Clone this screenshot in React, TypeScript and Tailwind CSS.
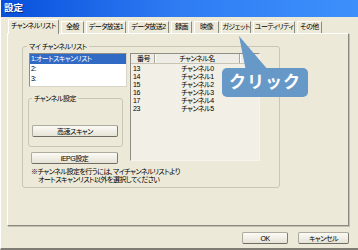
import React from 'react';

interface Tab {
  label: string;
  w: string;
  active?: boolean;
}

const tabs: Tab[] = [
  { label: 'チャンネルリスト', w: 'w-[51px]', active: true },
  { label: '全般', w: 'w-[23px]' },
  { label: 'データ放送1', w: 'w-[40px]' },
  { label: 'データ放送2', w: 'w-[41px]' },
  { label: '録画', w: 'w-[21px]' },
  { label: '映像', w: 'w-[25px]' },
  { label: 'ガジェット', w: 'w-[30px]' },
  { label: 'ユーティリティ', w: 'w-[42px]' },
  { label: 'その他', w: 'w-[25px]' },
];

const channels = [
  { no: '13', name: 'チャンネル0' },
  { no: '14', name: 'チャンネル1' },
  { no: '15', name: 'チャンネル2' },
  { no: '16', name: 'チャンネル3' },
  { no: '17', name: 'チャンネル4' },
  { no: '23', name: 'チャンネル5' },
];

const Btn = ({ children, className = '' }: { children: React.ReactNode; className?: string }) => (
  <div
    className={`flex items-center justify-center h-[12px] rounded-[2px] border border-[#ADAB9E] border-b-[#6F6D64] border-r-[#7E7C72] bg-linear-to-b from-[#FBFAF5] to-[#E6E3D6] leading-none ${className}`}
  >
    {children}
  </div>
);

export default function App() {
  return (
    <div className="relative w-[358px] h-[250px] overflow-hidden flex flex-col bg-[#ECE9D8] border-l border-l-white border-b-2 border-b-[#7F7D73] text-black text-[7px] tracking-[-0.5px] [font-family:'Liberation_Sans','Noto_Sans_CJK_JP',sans-serif] [font-feature-settings:'palt']">
      {/* Title bar */}
      <div className="h-[17px] shrink-0 flex items-center pl-[3px] bg-linear-to-r from-[#0650DC] via-[#2F7CF3] to-[#3D90FC]">
        <span className="text-white font-bold text-[9.5px] tracking-normal [text-shadow:1px_1px_0_#0A2C8A]">設定</span>
      </div>

      <div className="flex flex-col px-[6px]">
        {/* Tabs */}
        <div className="relative z-10 flex items-end gap-[2px] pl-[1px] h-[15px] mt-[2px]">
          {tabs.map((t) =>
            t.active ? (
              <div
                key={t.label}
                className={`${t.w} h-[15px] pb-[2px] flex items-center justify-center rounded-t-[2px] bg-[#ECE9D8] border-l border-t border-l-white border-t-white border-r border-r-[#8C8A80] whitespace-nowrap`}
              >
                {t.label}
              </div>
            ) : (
              <div
                key={t.label}
                className={`${t.w} h-[12px] mb-[1px] flex items-center justify-center border-l border-t border-l-white border-t-white border-r border-r-[#8C8A80] whitespace-nowrap`}
              >
                {t.label}
              </div>
            )
          )}
        </div>

        {/* Tab panel */}
        <div className="-mt-px w-[342px] h-[193px] border border-l-white border-t-white border-r-[#8C8A80] border-b-[#8C8A80] shadow-[1px_1px_0_#C2BFB0]">
          {/* マイ チャンネルリスト */}
          <div className="ml-[14px] mt-[12px] w-[258px] h-[142px] rounded-[3px] border border-[#C9C6B6] flex flex-col">
            <div className="-mt-[5px] ml-[4px] px-[2px] w-fit leading-[9px] bg-[#ECE9D8]">マイ チャンネルリスト</div>

            <div className="flex gap-[3px] pl-[5px] mt-[2px]">
              {/* left column */}
              <div className="w-[99px] flex flex-col">
                <div className="ml-[1px] w-[98px] h-[34px] bg-white border border-[#8F8D84] border-r-[#D8D5C8] border-b-[#D8D5C8] flex flex-col leading-[10px]">
                  <div className="h-[10px] bg-[#316AC5] text-white pl-[1px] whitespace-nowrap">1:オートスキャンリスト</div>
                  <div className="h-[10px] pl-[1px]">2:</div>
                  <div className="h-[10px] pl-[1px]">3:</div>
                </div>

                <div className="mt-[11px] w-[95px] h-[49px] rounded-[3px] border border-[#C9C6B6] flex flex-col">
                  <div className="-mt-[5px] ml-[3px] px-[2px] w-fit leading-[9px] bg-[#ECE9D8]">チャンネル設定</div>
                  <Btn className="mt-[22px] ml-[3px] w-[86px]">高速スキャン</Btn>
                </div>

                <Btn className="mt-[5px] ml-[3px] w-[87px]">iEPG設定</Btn>
              </div>

              {/* channel list view */}
              <div className="w-[130px] h-[108px] bg-[#F1EFE6] border border-[#8F8D84] border-r-[#F5F4EE] border-b-[#F5F4EE] flex flex-col">
                <div className="h-[10px] flex bg-[#EEEDE5] border-b border-b-[#C7C4B5] leading-[9px]">
                  <div className="w-[24px] pl-[6px] border-r border-r-[#ACA899] shadow-[1px_0_0_#fff]">番号</div>
                  <div className="w-[85px] text-center border-r border-r-[#ACA899] shadow-[1px_0_0_#fff]">チャンネル名</div>
                  <div className="flex-1" />
                </div>
                <div className="pt-[1px] flex flex-col leading-[8px]">
                  {channels.map((c) => (
                    <div key={c.no} className="h-[8px] flex">
                      <div className="w-[24px] pl-[2px]">{c.no}</div>
                      <div className="w-[85px] text-center">{c.name}</div>
                    </div>
                  ))}
                </div>
              </div>
            </div>

            <div className="mt-[4px] ml-[8px] leading-[8px] whitespace-nowrap">
              <div>※チャンネル設定を行うには、マイチャンネルリストより</div>
              <div className="pl-[7px]">オートスキャンリスト以外を選択してください</div>
            </div>
          </div>
        </div>

        {/* OK / Cancel */}
        <div className="mt-[6px] flex justify-end gap-[10px] pr-[3px]">
          <Btn className="w-[46px]">OK</Btn>
          <Btn className="w-[51px]">キャンセル</Btn>
        </div>
      </div>

      {/* callout */}
      <svg className="absolute left-0 top-0 pointer-events-none" width="358" height="250">
        <polygon points="238,36 245,71 268,71" fill="#6699C8" />
      </svg>
      <div className="absolute left-[221px] top-[68px] w-[86px] h-[29px] rounded-[5px] bg-[#6699C8] flex items-center justify-center text-white font-bold text-[17px] tracking-[1px] leading-none [font-feature-settings:normal]">
        クリック
      </div>
    </div>
  );
}
